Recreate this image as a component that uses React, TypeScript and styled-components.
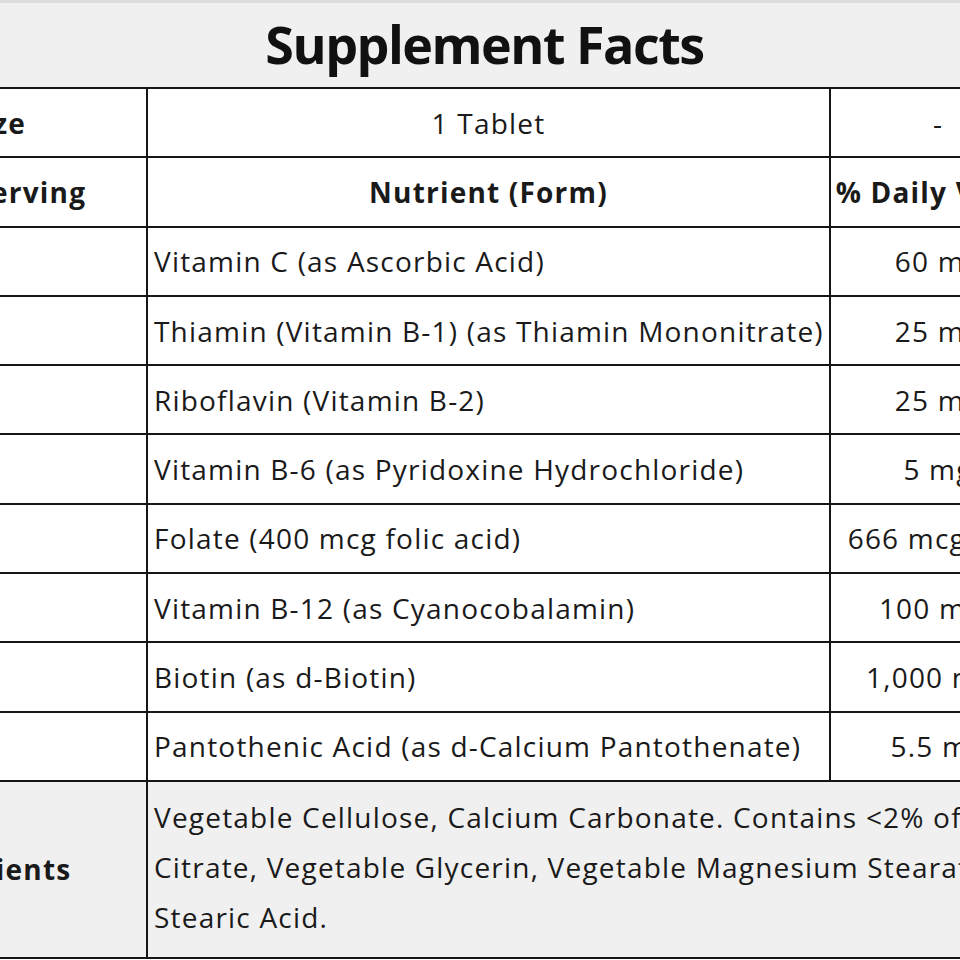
import React from "react";
import styled, { createGlobalStyle } from "styled-components";

const GlobalStyle = createGlobalStyle`
  html, body {
    margin: 0;
    padding: 0;
    background: #ffffff;
    overflow: hidden;
  }
  body {
    font-family: "Open Sans", "Noto Sans", "Liberation Sans", sans-serif;
    color: #1a1a1a;
  }
`;

const Viewport = styled.div`
  width: 960px;
  height: 960px;
  overflow: hidden;
  background: #ffffff;
`;

const Sheet = styled.div`
  margin-left: -273px;
  width: 1318px;
`;

const TitleBar = styled.div`
  box-sizing: border-box;
  height: 89px;
  background: #f0f0f0;
  border-top: 3px solid #dddddd;
  border-bottom: 2px solid #161616;
  display: flex;
  align-items: center;
  justify-content: center;
  padding-left: 197px;
  padding-bottom: 4px;
  font-size: 52px;
  font-weight: 700;
  letter-spacing: -1.5px;
  color: #111111;
`;

const Row = styled.div<{ $h: number; $shade?: boolean }>`
  box-sizing: border-box;
  height: ${(p) => p.$h}px;
  display: grid;
  grid-template-columns: 421px 683px 214px;
  border-bottom: 2px solid #161616;
  background: ${(p) => (p.$shade ? "#f0f0f0" : "#ffffff")};
`;

const Cell = styled.div<{ $align?: "left" | "center"; $bold?: boolean; $last?: boolean; $span?: number }>`
  box-sizing: border-box;
  display: flex;
  align-items: center;
  justify-content: ${(p) => (p.$align === "center" ? "center" : "flex-start")};
  text-align: ${(p) => p.$align ?? "left"};
  padding: 0 6px;
  font-size: 28px;
  letter-spacing: 1.2px;
  font-weight: ${(p) => (p.$bold ? 700 : 400)};
  white-space: nowrap;
  overflow: hidden;
  border-right: ${(p) => (p.$last ? "none" : "2px solid #161616")};
  grid-column: span ${(p) => p.$span ?? 1};
`;

const IngredientText = styled.div`
  line-height: 50px;
  margin-top: -4px;
`;

const nutrients: [string, string][] = [
  ["Vitamin C (as Ascorbic Acid)", "60 mg"],
  ["Thiamin (Vitamin B-1) (as Thiamin Mononitrate)", "25 mg"],
  ["Riboflavin (Vitamin B-2)", "25 mg"],
  ["Vitamin B-6 (as Pyridoxine Hydrochloride)", "5 mg"],
  ["Folate (400 mcg folic acid)", "666 mcg DFE"],
  ["Vitamin B-12 (as Cyanocobalamin)", "100 mcg"],
  ["Biotin (as d-Biotin)", "1,000 mcg"],
  ["Pantothenic Acid (as d-Calcium Pantothenate)", "5.5 mg"],
];

const ROW_H = 69.3;

export default function App() {
  return (
    <>
      <GlobalStyle />
      <Viewport>
        <Sheet>
          <TitleBar>Supplement Facts</TitleBar>
          <Row $h={ROW_H}>
            <Cell $align="center" $bold>Serving Size</Cell>
            <Cell $align="center">1 Tablet</Cell>
            <Cell $align="center" $last>-</Cell>
          </Row>
          <Row $h={ROW_H}>
            <Cell $align="center" $bold>Amount Per Serving</Cell>
            <Cell $align="center" $bold>Nutrient (Form)</Cell>
            <Cell $align="center" $bold $last>% Daily Value</Cell>
          </Row>
          {nutrients.map(([name, amount]) => (
            <Row $h={ROW_H} key={name}>
              <Cell $align="center" />
              <Cell>{name}</Cell>
              <Cell $align="center" $last>{amount}</Cell>
            </Row>
          ))}
          <Row $h={177} $shade>
            <Cell $align="center" $bold>Other Ingredients</Cell>
            <Cell $span={2} $last>
              <IngredientText>
                Vegetable Cellulose, Calcium Carbonate. Contains &lt;2% of:
                <br />
                Citrate, Vegetable Glycerin, Vegetable Magnesium Stearate,
                <br />
                Stearic Acid.
              </IngredientText>
            </Cell>
          </Row>
        </Sheet>
      </Viewport>
    </>
  );
}
